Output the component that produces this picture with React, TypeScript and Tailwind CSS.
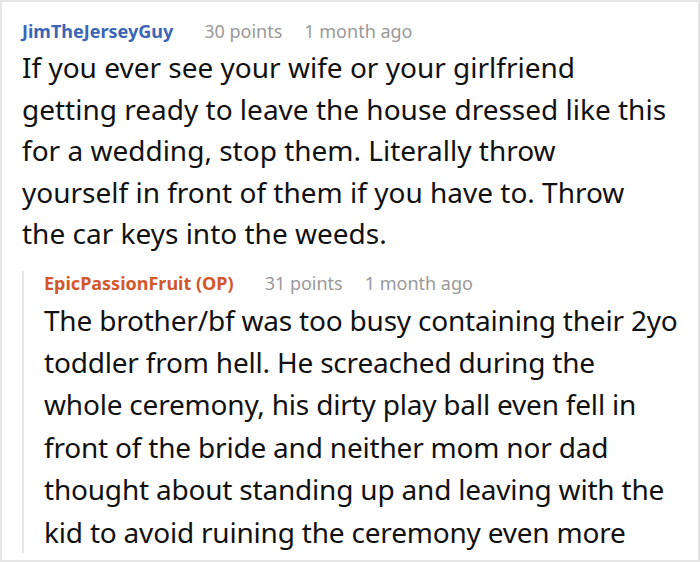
const FONT = "font-['Noto_Sans','Open_Sans',sans-serif]"

function Meta({ name, color, points }: { name: string; color: string; points: string }) {
  return (
    <div className="flex items-baseline text-[18px] leading-[24px]">
      <span className={`font-bold ${color}`}>{name}</span>
      <span className="ml-[31px] text-[#999999]">{points}</span>
      <span className="ml-[22px] text-[#999999]">1 month ago</span>
    </div>
  )
}

function Lines({ lines, lh }: { lines: string[]; lh: string }) {
  return (
    <p className={`mt-[4px] text-[28px] text-[#111111] whitespace-nowrap ${lh}`}>
      {lines.map((l, i) => (
        <span key={i} className="block">{l}</span>
      ))}
    </p>
  )
}

export default function App() {
  return (
    <div className={`w-[700px] h-[562px] bg-white border-2 border-[#e6e6e6] overflow-hidden ${FONT}`}>
      <div className="pl-[20px] pt-[17px]">
        <Meta name="JimTheJerseyGuy" color="text-[#3a66b5]" points="30 points" />
        <Lines
          lh="leading-[41.5px]"
          lines={[
            'If you ever see your wife or your girlfriend',
            'getting ready to leave the house dressed like this',
            'for a wedding, stop them. Literally throw',
            'yourself in front of them if you have to. Throw',
            'the car keys into the weeds.',
          ]}
        />
        <div className="mt-[16px] border-l-2 border-[#e6e6e6] pl-[20px]">
          <Meta name="EpicPassionFruit (OP)" color="text-[#d2572b]" points="31 points" />
          <Lines
            lh="leading-[42.4px] tracking-[-0.2px]"
            lines={[
              'The brother/bf was too busy containing their 2yo',
              'toddler from hell. He screached during the',
              'whole ceremony, his dirty play ball even fell in',
              'front of the bride and neither mom nor dad',
              'thought about standing up and leaving with the',
              'kid to avoid ruining the ceremony even more',
            ]}
          />
        </div>
      </div>
    </div>
  )
}
